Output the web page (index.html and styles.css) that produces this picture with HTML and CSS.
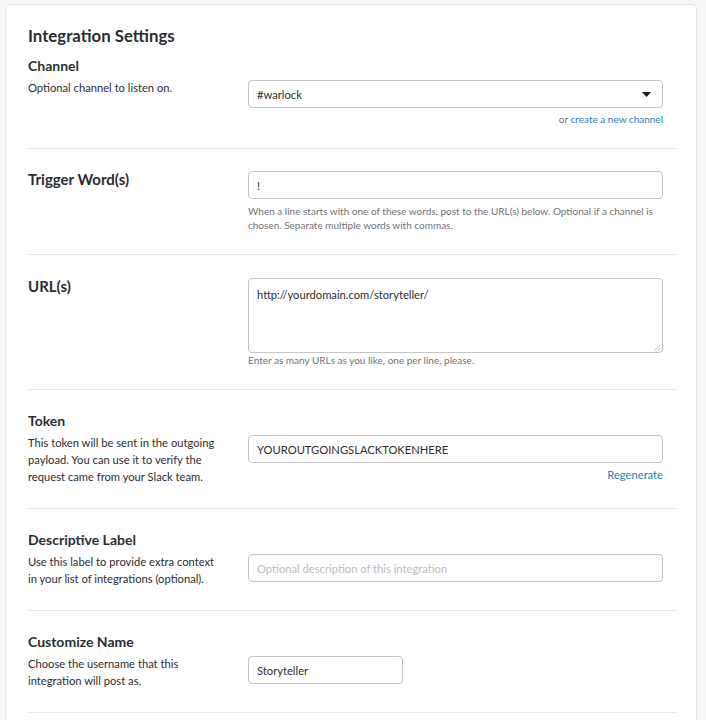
FILE: index.html
```html
<!DOCTYPE html>
<html lang="en">
<head>
<meta charset="utf-8">
<title>Integration Settings</title>
<link rel="stylesheet" href="styles.css">
</head>
<body>
<div class="card">
  <h2 class="title">Integration Settings</h2>

  <section class="row first">
    <h3 class="heading">Channel</h3>
    <div class="grid">
      <p class="desc">Optional channel to listen on.</p>
      <div class="control">
        <div class="select">
          <span>#warlock</span>
          <svg class="caret" width="9" height="5" viewBox="0 0 9 5"><path d="M0 0h9L4.5 5z" fill="#1d1c1d"/></svg>
        </div>
        <p class="aside"><span class="muted">or</span> <a class="link" href="#">create a new channel</a></p>
      </div>
    </div>
  </section>

  <section class="row sided compact">
    <div class="grid">
      <h3 class="heading side">Trigger Word(s)</h3>
      <div class="control offset">
        <div class="input">!</div>
        <p class="help">When a line starts with one of these words, post to the URL(s) below. Optional if a channel is chosen. Separate multiple words with commas.</p>
      </div>
    </div>
  </section>

  <section class="row sided">
    <div class="grid">
      <h3 class="heading side">URL(s)</h3>
      <div class="control offset">
        <div class="textarea">http://yourdomain.com/storyteller/
          <svg class="grip" width="6" height="6" viewBox="0 0 6 6"><path d="M6 1L1 6M6 4L4 6" stroke="#bbb" stroke-width="1"/></svg>
        </div>
        <p class="help tight">Enter as many URLs as you like, one per line, please.</p>
      </div>
    </div>
  </section>

  <section class="row">
    <h3 class="heading">Token</h3>
    <div class="grid">
      <p class="desc">This token will be sent in the outgoing payload. You can use it to verify the request came from your Slack team.</p>
      <div class="control">
        <div class="input">YOUROUTGOINGSLACKTOKENHERE</div>
        <p class="aside regen"><a class="link" href="#">Regenerate</a></p>
      </div>
    </div>
  </section>

  <section class="row">
    <h3 class="heading">Descriptive Label</h3>
    <div class="grid">
      <p class="desc">Use this label to provide extra context in your list of integrations (optional).</p>
      <div class="control">
        <div class="input placeholder">Optional description of this integration</div>
      </div>
    </div>
  </section>

  <section class="row">
    <h3 class="heading">Customize Name</h3>
    <div class="grid">
      <p class="desc">Choose the username that this integration will post as.</p>
      <div class="control">
        <div class="input short">Storyteller</div>
      </div>
    </div>
  </section>
</div>
</body>
</html>
```

FILE: styles.css
```css
* { box-sizing: border-box; }
html, body { margin: 0; padding: 0; }
body {
  background: #f7f7f7;
  font-family: Lato, "Open Sans", sans-serif;
  color: #2c2d30;
  padding: 4px 9px 0 5px;
}
.card {
  background: #fff;
  border: 1px solid #e8e8e8;
  border-bottom: none;
  border-radius: 5px 5px 0 0;
  padding: 19px 19px 0 22px;
  min-height: 716px;
}
.title {
  margin: 0 0 8px;
  font-size: 16.8px;
  line-height: 24px;
  font-weight: 700;
}
.row {
  border-bottom: 1px solid #e8e8e8;
  padding: 21px 14px 23px 0;
}
.row.first { padding-top: 0; padding-bottom: 22px; }
.row.sided { padding-bottom: 22px; }
.row.compact { padding-top: 20px; }
.heading {
  margin: 0 0 4px;
  font-size: 14px;
  line-height: 20px;
  font-weight: 700;
}
.heading.side { margin: 0; font-size: 15px; }
.grid {
  display: grid;
  grid-template-columns: 220px 1fr;
}
.desc {
  margin: -1px 0 0;
  font-size: 11.2px;
  line-height: 17px;
  padding-right: 28px;
}
.control.offset { padding-top: 2px; }
.select, .input, .textarea {
  border: 1px solid #c5c5c5;
  border-radius: 4px;
  font-size: 11.2px;
  color: #2c2d30;
  background: #fff;
}
.select, .input {
  height: 28px;
  display: flex;
  align-items: center;
  padding: 0 8px;
}
.select { justify-content: space-between; padding-right: 11px; }
.input.placeholder { color: #bdbdbd; }
.input.short { width: 155px; }
.textarea {
  position: relative;
  height: 75px;
  padding: 8px 8px;
  line-height: 16px;
}
.grip { position: absolute; right: 2px; bottom: 2px; }
.aside {
  margin: 4px 0 0;
  text-align: right;
  font-size: 10px;
  line-height: 14px;
}
.aside.regen { font-size: 11.2px; margin-top: 5px; }
.muted { color: #717274; }
.link { color: #2a80b9; text-decoration: none; }
.help {
  margin: 5px 0 0;
  font-size: 10px;
  line-height: 14px;
  color: #717274;
}
.help.tight { margin-top: 0; }
```
